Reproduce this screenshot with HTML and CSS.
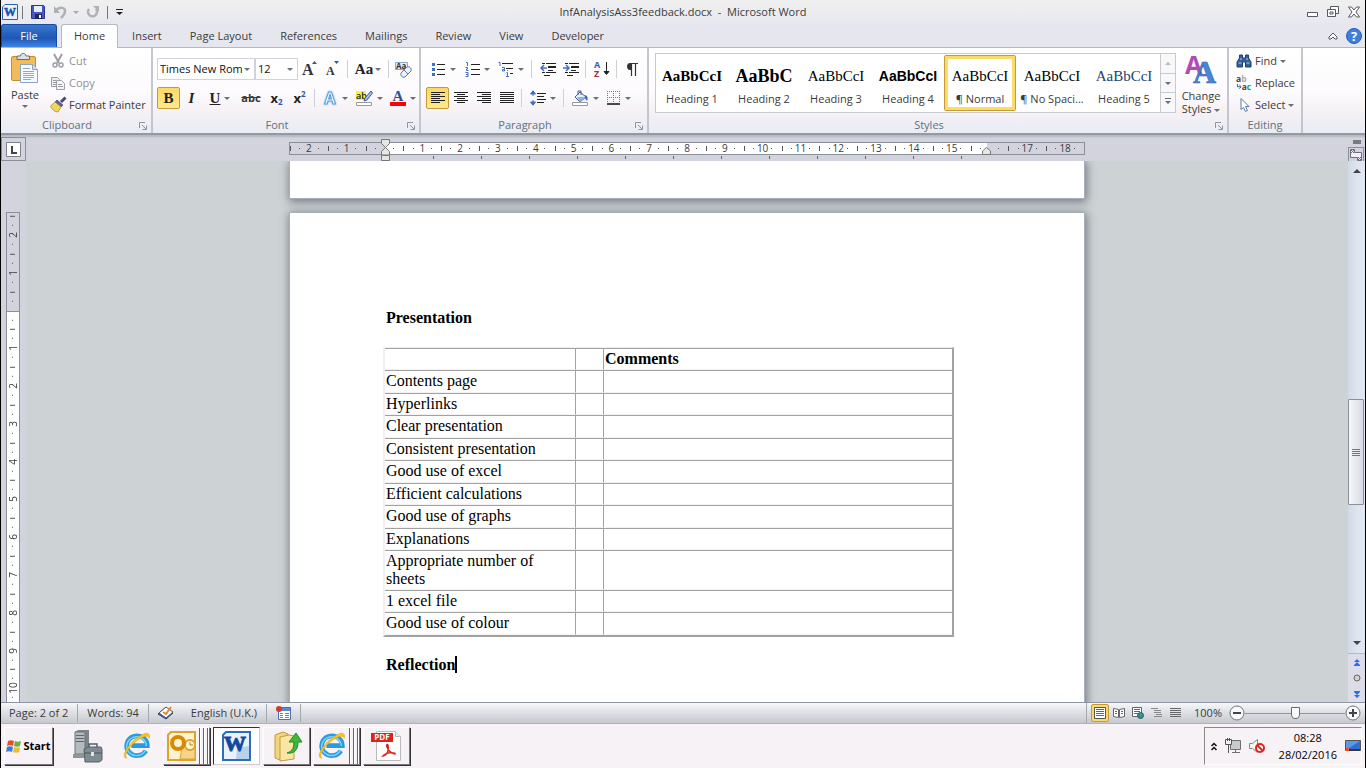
FILE: index.html
```html
<!DOCTYPE html>
<html lang="en">
<head>
    <meta charset="UTF-8">
    <title>InfAnalysisAss3feedback.docx - Microsoft Word</title>
    <link rel="stylesheet" href="styles.css">
</head>
<body>
<svg class="defs" aria-hidden="true">
    <symbol id="launcher" viewBox="0 0 8 8"><path d="M.5 6V.5H6M3 3l4 4M7.500 3.500v4h-4" fill="none" stroke="#8f959c"/></symbol>
    <symbol id="ie" viewBox="0 0 32 32">
        <path d="M25.500 21A11 10.500 0 1 1 27 15.500H10" fill="none" stroke="#2a9be0" stroke-width="5"/>
        <path d="M25 20.500A10.500 10 0 1 1 26 16" fill="none" stroke="#7fd4fa" stroke-width="1.500"/>
        <path d="M5 29C-1 29 4 17 14 9S31 0 29 8c0-4-6-3-14 3S2 26 5 29z" fill="#f8c51c" stroke="#e0a010" stroke-width=".6"/>
    </symbol>
</svg>

<!-- title bar -->
<header class="titlebar">
    <div class="quick">
        <svg width="16" height="16" viewBox="0 0 16 16"><path d="M3 .500h12.500v15H.5V3z" fill="#eaf3fc" stroke="#2a62b4"/><text x="8" y="12" text-anchor="middle" font-family="Liberation Serif" font-weight="bold" font-size="12" fill="#1c52a8" stroke="#1c52a8" stroke-width=".5">W</text></svg>
        <i class="bar"></i>
        <button type="button" aria-label="Save"><svg width="14" height="14" viewBox="0 0 14 14"><path d="M.5.5h12l1 1v12H.5z" fill="#4b55c4" stroke="#2c3390"/><path d="M3 1h8v6H3z" fill="#e4eefb"/><path d="M4 9h7v5H4z" fill="#20265c"/><path d="M8 10h2v3H8z" fill="#fff"/></svg></button>
        <button type="button" class="undo" aria-label="Undo"><svg width="13" height="13" viewBox="0 0 13 13"><path d="M2 4c4-3 9-3 9 1 0 3-2 5-4 7" fill="none" stroke="#aeb1b6" stroke-width="2.500"/><path d="M0 0v7h6z" fill="#aeb1b6"/></svg><b class="caret pale"></b></button>
        <button type="button" aria-label="Repeat"><svg width="14" height="13" viewBox="0 0 14 13"><path d="M3 3a4.500 4.500 0 1 0 7 0" fill="none" stroke="#aeb1b6" stroke-width="2.500"/><path d="M7 0h6v6z" fill="#aeb1b6"/></svg></button>
        <i class="bar"></i>
        <button type="button" aria-label="Customize"><svg width="7" height="6" viewBox="0 0 7 6"><path d="M0 0h7v1H0zM0 3h7L3.500 6z" fill="#222"/></svg></button>
    </div>
    <h1>InfAnalysisAss3feedback.docx&nbsp; -&nbsp; Microsoft Word</h1>
    <div class="winbtns">
        <button type="button" aria-label="Minimize"><svg width="11" height="12" viewBox="0 0 11 12"><path d="M.5 6.500h10v4H.5z" fill="#fff" stroke="#555a61"/></svg></button>
        <button type="button" aria-label="Restore"><svg width="12" height="12" viewBox="0 0 12 12"><path d="M3.500.5h8v7h-8z" fill="#fff" stroke="#555a61"/><path d="M.5 3.500h8v7h-8z" fill="#fff" stroke="#555a61"/><path d="M3 6h3v2H3z" fill="none" stroke="#555a61"/></svg></button>
        <button type="button" aria-label="Close"><svg width="12" height="12" viewBox="0 0 12 12"><path d="M.5 1h3L6 4l2.500-3h3L8 6l3.500 5h-3L6 8l-2.500 3h-3L4 6z" fill="#fff" stroke="#555a61"/></svg></button>
    </div>
</header>

<!-- tabs -->
<nav class="tabs">
    <a href="#" class="file">File</a>
    <a href="#" class="on">Home</a>
    <a href="#">Insert</a>
    <a href="#">Page Layout</a>
    <a href="#">References</a>
    <a href="#">Mailings</a>
    <a href="#">Review</a>
    <a href="#">View</a>
    <a href="#">Developer</a>
    <div class="help">
        <button type="button" aria-label="Minimize the Ribbon"><svg width="10" height="8" viewBox="0 0 10 8"><path d="M1 5l4-4 4 4v2H7L5 5 3 7H1z" fill="#fff" stroke="#555a61"/></svg></button>
        <button type="button" aria-label="Help"><svg width="16" height="16" viewBox="0 0 16 16"><circle cx="8" cy="8" r="7.500" fill="#3f7fdc" stroke="#2a5fb4"/><text x="8" y="13" text-anchor="middle" font-family="Open Sans" font-weight="bold" font-size="13" fill="#fff">?</text></svg></button>
    </div>
</nav>

<!-- ribbon -->
<div class="ribbon">
    <section class="group clipboard">
        <div class="body">
            <button type="button" class="big">
                <svg width="28" height="31" viewBox="0 0 28 31"><rect x=".5" y="3.500" width="24" height="24" rx="1.500" fill="#f0bc5a" stroke="#c98e2c"/><path d="M6 6.500V3h3.500C9.500-.5 15-.5 15 3h3.500v3.500z" fill="#dde1e5" stroke="#666c74"/><path d="M9.500 11.500h12l5 5v13h-17z" fill="#f8fbff" stroke="#8ba3c4"/><path d="M21.500 11.500v5h5" fill="#d2e0f2" stroke="#8ba3c4"/><path d="M12 15.500h7M12 18.500h11M12 20.500h11M12 22.500h11M12 24.500h11M12 26.500h8" stroke="#8fa8ce"/></svg>
                <span>Paste</span>
                <b class="caret"></b>
            </button>
            <div class="list">
                <button type="button" disabled><svg width="16" height="16" viewBox="0 0 16 16"><path d="M4 1l5 9M12 1L7 10" stroke="#9b9fa5" stroke-width="2"/><circle cx="5" cy="12" r="2" fill="none" stroke="#9b9fa5" stroke-width="1.500"/><circle cx="11" cy="12" r="2" fill="none" stroke="#9b9fa5" stroke-width="1.500"/></svg>Cut</button>
                <button type="button" disabled><svg width="16" height="16" viewBox="0 0 16 16"><path d="M1.500 2.500h6l2 2v7h-8z" fill="#eee" stroke="#9b9fa5"/><path d="M6.500 5.500h5l3 3v6h-8z" fill="#f4f4f4" stroke="#9b9fa5"/><path d="M3 5.500h3M3 7.500h3M8 9.500h4M8 11.500h5M3 9.500h3" stroke="#9b9fa5"/></svg>Copy</button>
                <button type="button"><svg width="16" height="16" viewBox="0 0 16 16"><path d="M15.500.5L11 5" stroke="#4a4a6a" stroke-width="3"/><path d="M7 3l6 5-2 2-6-5z" fill="#5b62a8" stroke="#33386e" stroke-width=".6"/><path d="M5 5l6 5-3 5c-3 0-6-2-7.500-6z" fill="#f1d65e" stroke="#a8842a" stroke-width=".7"/></svg>Format Painter</button>
            </div>
        </div>
        <footer>Clipboard<svg width="8" height="8"><use href="#launcher"/></svg></footer>
    </section>

    <section class="group font">
        <div class="body rows">
            <div class="row">
                <select class="face" aria-label="Font"><option>Times New Rom</option></select>
                <select class="size" aria-label="Font size"><option>12</option></select>
                <button type="button" class="tool serif" aria-label="Grow font"><svg width="16" height="18" viewBox="0 0 16 18"><text x="0" y="15" font-family="Liberation Serif" font-weight="bold" font-size="16" fill="#333">A</text><path d="M10 4h5l-2.500-3z" fill="#2b57b0"/></svg></button>
                <button type="button" class="tool serif" aria-label="Shrink font"><svg width="14" height="18" viewBox="0 0 14 18"><text x="0" y="15" font-family="Liberation Serif" font-weight="bold" font-size="12" fill="#333">A</text><path d="M8 1h5l-2.500 3z" fill="#2b57b0"/></svg></button>
                <i class="sep"></i>
                <button type="button" class="tool wide serif case" aria-label="Change case">Aa<b class="caret"></b></button>
                <i class="sep"></i>
                <button type="button" class="tool" aria-label="Clear formatting"><svg width="17" height="17" viewBox="0 0 17 17"><path d="M.5 1.500h12v7H.5z" fill="#e6eefb" stroke="#8ea8cc"/><text x="1" y="8" font-family="Open Sans" font-weight="bold" font-size="8" fill="#333">Aa</text><path d="M6 12l6-6c2-1 5 1 4 4l-6 6c-3 1-5-2-4-4z" fill="#edf2fc" stroke="#5878a8"/><path d="M9 9l4 4" stroke="#5878a8"/></svg></button>
            </div>
            <div class="row">
                <button type="button" class="tool serif on"><b>B</b></button>
                <button type="button" class="tool serif"><em>I</em></button>
                <button type="button" class="tool wide serif"><u>U</u><b class="caret"></b></button>
                <button type="button" class="tool strike"><s>abc</s></button>
                <button type="button" class="tool script">x<sub>2</sub></button>
                <button type="button" class="tool script">x<sup>2</sup></button>
                <i class="sep"></i>
                <button type="button" class="tool wide" aria-label="Text effects"><svg width="16" height="16" viewBox="0 0 16 16"><text class="glow" x="8" y="14" text-anchor="middle" font-family="Open Sans" font-weight="bold" font-size="16" fill="#fff" stroke="#5b9bd3">A</text></svg><b class="caret"></b></button>
                <button type="button" class="tool wide" aria-label="Text highlight colour"><svg width="17" height="17" viewBox="0 0 17 17"><path d="M0 1h10v9H0z" fill="#f7f04a"/><text x="0" y="9" font-family="Open Sans" font-weight="600" font-size="9" fill="#222">ab</text><path d="M15 1l1.500 2L11 10l-3 1 1-3z" fill="#9fbdf0" stroke="#45639c"/><path d="M.5 12.500h15v3H.5z" fill="#fff" stroke="#999"/></svg><b class="caret"></b></button>
                <button type="button" class="tool wide" aria-label="Font colour"><svg width="16" height="17" viewBox="0 0 16 17"><text x="8" y="11" text-anchor="middle" font-family="Liberation Serif" font-weight="bold" font-size="15" fill="#2f4f8f">A</text><path d="M0 12h16v4H0z" fill="#f00"/></svg><b class="caret"></b></button>
            </div>
        </div>
        <footer>Font<svg width="8" height="8"><use href="#launcher"/></svg></footer>
    </section>

    <section class="group para">
        <div class="body rows">
            <div class="row">
                <button type="button" class="tool wide" aria-label="Bullets"><svg width="15" height="15" viewBox="0 0 15 15"><path d="M1 1h3v3H1zM1 6h3v3H1zM1 11h3v3H1z" fill="#3f6fc4"/><path d="M6 2.500h8M6 7.500h8M6 12.500h8" stroke="#222"/></svg><b class="caret"></b></button>
                <button type="button" class="tool wide" aria-label="Numbering"><svg width="15" height="15" viewBox="0 0 15 15"><path d="M1 .5h1.500V4M.5 5.500h2v1.500h-1v1.500h2M.5 10.500h2.500v4H.5M1 12.500h2" fill="none" stroke="#3f6fc4"/><path d="M6 2.500h9M6 7.500h9M6 12.500h9" stroke="#222"/></svg><b class="caret"></b></button>
                <button type="button" class="tool wide" aria-label="Multilevel list"><svg width="16" height="16" viewBox="0 0 16 16"><path d="M.5 1.500H2V5M4 6.500h2.500V10H4.500V8.500h2M9.500 9v1M8.500 11.500h1V15M8 15.500h3" fill="none" stroke="#3f6fc4"/><path d="M4 2.500h11M8 7.500h7M12 12.500h3" stroke="#222"/></svg><b class="caret"></b></button>
                <i class="sep"></i>
                <button type="button" class="tool" aria-label="Decrease indent"><svg width="16" height="14" viewBox="0 0 16 14"><path d="M2 1.500h3M6 1.500h10M8 4.500h8M8 5.500h8M8 8.500h5M2 10.500h3M6 10.500h10M4 13.500h6" stroke="#222"/><path d="M7 6H1M4 3L1 6l3 3" stroke="#3f6fc4" stroke-width="1.500" fill="none"/></svg></button>
                <button type="button" class="tool" aria-label="Increase indent"><svg width="16" height="14" viewBox="0 0 16 14"><path d="M2 1.500h3M6 1.500h10M8 4.500h8M8 5.500h8M8 8.500h5M2 10.500h3M6 10.500h10M4 13.500h6" stroke="#222"/><path d="M0 6h6M3 3l3 3-3 3" stroke="#3f6fc4" stroke-width="1.500" fill="none"/></svg></button>
                <i class="sep"></i>
                <button type="button" class="tool" aria-label="Sort"><svg width="16" height="16" viewBox="0 0 16 16"><text x="0" y="7" font-family="Open Sans" font-weight="bold" font-size="9" fill="#3560b0">A</text><text x="0" y="16" font-family="Open Sans" font-weight="bold" font-size="9" fill="#a03040">Z</text><path d="M12.500 1v12M10 10.500l2.500 3 2.500-3z" stroke="#222" fill="#222"/></svg></button>
                <i class="sep"></i>
                <button type="button" class="tool" aria-label="Show formatting marks"><svg width="11" height="13" viewBox="0 0 11 13"><path d="M4.500 13V.5H11M8.500.5V13" fill="none" stroke="#333" stroke-width="1.200"/><path d="M5 0H3C-1 0-1 7 3 7h2z" fill="#333"/></svg></button>
            </div>
            <div class="row spaced">
                <button type="button" class="tool on" aria-label="Align left"><svg width="14" height="12" viewBox="0 0 14 12"><path d="M0 .5h14M0 2.500h9M0 4.500h14M0 6.500h9M0 8.500h14M0 10.500h9" stroke="#222"/></svg></button>
                <button type="button" class="tool" aria-label="Centre"><svg width="14" height="12" viewBox="0 0 14 12"><path d="M0 .5h14M3 2.500h8M0 4.500h14M3 6.500h8M0 8.500h14M3 10.500h8" stroke="#222"/></svg></button>
                <button type="button" class="tool" aria-label="Align right"><svg width="14" height="12" viewBox="0 0 14 12"><path d="M0 .5h14M5 2.500h9M0 4.500h14M5 6.500h9M0 8.500h14M5 10.500h9" stroke="#222"/></svg></button>
                <button type="button" class="tool" aria-label="Justify"><svg width="14" height="12" viewBox="0 0 14 12"><path d="M0 .5h14M0 2.500h14M0 4.500h14M0 6.500h14M0 8.500h14M0 10.500h14" stroke="#222"/></svg></button>
                <i class="sep"></i>
                <button type="button" class="tool wide" aria-label="Line spacing"><svg width="16" height="16" viewBox="0 0 16 16"><path d="M3 1v5M3 10v5M.5 4L3 .8 5.500 4zM.5 12L3 15.200 5.500 12z" stroke="#3f6fc4" fill="#3f6fc4"/><path d="M7 3.500h9M7 6.500h7M7 9.500h9M7 12.500h7" stroke="#222"/></svg><b class="caret"></b></button>
                <i class="sep"></i>
                <button type="button" class="tool wide" aria-label="Shading"><svg width="17" height="17" viewBox="0 0 17 17"><path d="M8 2l6 5-6 5-5-5z" fill="#e9f0fb" stroke="#44608c"/><path d="M5 7h9l-6 5z" fill="#8fb1e8"/><path d="M6 5V1h3v4" fill="none" stroke="#44608c"/><path d="M13 5c3 1 3 4 2 6l-2-3z" fill="#2e63c4"/><path d="M.5 12.500h15v3H.5z" fill="#fff" stroke="#999"/></svg><b class="caret"></b></button>
                <button type="button" class="tool wide" aria-label="Borders"><svg width="14" height="14" viewBox="0 0 14 14"><path d="M0 .5h13M0 6.500h13M.5 0v12M6.500 0v12M12.500 0v12" stroke="#777" stroke-dasharray="1 1"/><path d="M0 13h13" stroke="#111" stroke-width="1.500"/></svg><b class="caret"></b></button>
            </div>
        </div>
        <footer>Paragraph<svg width="8" height="8"><use href="#launcher"/></svg></footer>
    </section>

    <section class="group styles">
        <div class="body">
            <div class="gallery">
                <button type="button"><span class="pv strong">AaBbCcI</span>Heading 1</button>
                <button type="button"><span class="pv strong large">AaBbC</span>Heading 2</button>
                <button type="button"><span class="pv">AaBbCcI</span>Heading 3</button>
                <button type="button"><span class="pv sans">AaBbCcI</span>Heading 4</button>
                <button type="button" class="on"><span class="pv">AaBbCcI</span>¶ Normal</button>
                <button type="button"><span class="pv">AaBbCcI</span>¶ No Spaci...</button>
                <button type="button"><span class="pv navy">AaBbCcI</span>Heading 5</button>
                <div class="updown">
                    <button type="button" aria-label="Row up" disabled><b class="caret up"></b></button>
                    <button type="button" aria-label="Row down"><b class="caret"></b></button>
                    <button type="button" aria-label="More"><b class="caret line"></b></button>
                </div>
            </div>
            <button type="button" class="big change">
                <svg width="30" height="30" viewBox="0 0 30 30"><text x="-1" y="19" font-family="Open Sans" font-weight="bold" font-size="25" fill="#b04cb4">A</text><text x="7" y="28" font-family="Liberation Serif" font-weight="bold" font-size="32" fill="#4a86d8" stroke="#2c5fae" stroke-width=".6">A</text></svg>
                <span>Change<br>Styles <b class="caret"></b></span>
            </button>
        </div>
        <footer>Styles<svg width="8" height="8"><use href="#launcher"/></svg></footer>
    </section>

    <section class="group editing">
        <div class="body">
            <div class="list">
                <button type="button"><svg width="15" height="14" viewBox="0 0 15 14"><path d="M3 1h3v3h3V1h3v3l2.500 4v5H9V8H6v5H.5V8L3 4z" fill="#345f9f" stroke="#1f3f78"/><path d="M2 9h3M10 9h3M3.500 5h2M9.500 5h2" stroke="#b8d0f0"/></svg>Find <b class="caret"></b></button>
                <button type="button"><svg width="17" height="16" viewBox="0 0 17 16"><text x="0" y="7" font-family="Open Sans" font-weight="bold" font-size="9" fill="#444">a<tspan fill="#aaa">b</tspan></text><text x="6" y="15" font-family="Open Sans" font-weight="bold" font-size="9" fill="#444">a<tspan fill="#2a9a3a">c</tspan></text><path d="M1.500 9v3H5M3.500 10L5.500 12l-2 2" stroke="#2b57b0" fill="none"/></svg>Replace</button>
                <button type="button"><svg width="15" height="16" viewBox="0 0 15 16"><path d="M4.500 1.500v11l2.500-2 2 4 2-1-2-4h3.500z" fill="#fff" stroke="#5a78a8"/></svg>Select <b class="caret"></b></button>
            </div>
        </div>
        <footer>Editing</footer>
    </section>
</div>

<!-- document area -->
<div class="hbar">
    <div class="tabstop"><svg width="15" height="15" viewBox="0 0 15 15"><path d="M.5.5h14v14H.5z" fill="#fff" stroke="#7c818c"/><path d="M6 4v7h5" fill="none" stroke="#444" stroke-width="2"/></svg></div>
    <div class="htrack">
        <div class="ruler">
            <span>2</span><span>1</span><span></span><span>1</span><span>2</span><span>3</span><span>4</span><span>5</span><span>6</span><span>7</span><span>8</span><span>9</span><span>10</span><span>11</span><span>12</span><span>13</span><span>14</span><span>15</span><span></span><span>17</span><span>18</span>
            <svg class="indent left" width="10" height="22" viewBox="0 0 10 22"><path d="M.5.5h8v4l-4 4-4-4zM.5 16v-3.500l4-4 4 4V16zM.5 16.500h8v5h-8z" fill="#e6e6e2" stroke="#777"/></svg>
            <svg class="indent right" width="10" height="8" viewBox="0 0 10 8"><path d="M.5 7.500V4l4-3.500 4 3.500v3.500z" fill="#e6e6e2" stroke="#777"/></svg>
        </div>
    </div>
    <div class="vtop">
        <i></i>
        <button type="button" aria-label="View ruler"><svg width="14" height="14" viewBox="0 0 14 14"><path d="M1.500 1.500h4v3h7v8h-4v-3h-7z" fill="#f6eefa" stroke="#6b7078"/><path d="M2 2l3 3M5 2L2 5M9 9l3 3M12 9l-3 3" stroke="#6b7078"/></svg></button>
    </div>
</div>
<main class="workspace">
    <div class="vbar">
        <div class="vruler">
            <span>2</span><span>1</span><span></span><span>1</span><span>2</span><span>3</span><span>4</span><span>5</span><span>6</span><span>7</span><span>8</span><span>9</span><span>10</span><span></span>
        </div>
    </div>
    <div class="canvas">
        <div class="page prev"></div>
        <article class="page">
            <h2>Presentation</h2>
            <table>
                <thead>
                <tr><th class="item"></th><th class="mark"></th><th>Comments</th></tr>
                </thead>
                <tbody>
                <tr><td>Contents page</td><td></td><td></td></tr>
                <tr><td>Hyperlinks</td><td></td><td></td></tr>
                <tr><td>Clear presentation</td><td></td><td></td></tr>
                <tr><td>Consistent presentation</td><td></td><td></td></tr>
                <tr><td>Good use of excel</td><td></td><td></td></tr>
                <tr><td>Efficient calculations</td><td></td><td></td></tr>
                <tr><td>Good use of graphs</td><td></td><td></td></tr>
                <tr><td>Explanations</td><td></td><td></td></tr>
                <tr><td>Appropriate number of<br>sheets</td><td></td><td></td></tr>
                <tr><td>1 excel file</td><td></td><td></td></tr>
                <tr><td>Good use of colour</td><td></td><td></td></tr>
                </tbody>
            </table>
            <h2 class="typing">Reflection</h2>
        </article>
    </div>
    <div class="scroll">
        <button type="button" aria-label="Scroll up"><b class="caret up"></b></button>
        <div class="track"><div class="thumb"><svg width="8" height="7" viewBox="0 0 8 7"><path d="M0 .5h8M0 2.500h8M0 4.500h8M0 6.500h8" stroke="#777"/></svg></div></div>
        <button type="button" aria-label="Scroll down"><b class="caret"></b></button>
        <div class="browse">
            <button type="button" aria-label="Previous page"><svg width="6" height="7" viewBox="0 0 6 7"><path d="M0 3l3-3 3 3zM0 6l3-3 3 3v1H0z" fill="#2f6df0"/></svg></button>
            <button type="button" aria-label="Select browse object"><svg width="8" height="8" viewBox="0 0 8 8"><circle cx="4" cy="4" r="3" fill="#d0d0d0" stroke="#666"/></svg></button>
            <button type="button" aria-label="Next page"><svg width="6" height="7" viewBox="0 0 6 7"><path d="M0 1l3 3 3-3V0H0zM0 4l3 3 3-3z" fill="#2f6df0"/></svg></button>
        </div>
    </div>
</main>

<!-- status bar -->
<div class="status">
    <span class="cell">Page: 2 of 2</span>
    <span class="cell">Words: 94</span>
    <span class="cell lang"><svg width="16" height="14" viewBox="0 0 16 14"><path d="M0 8l7-6 8 5-7 6z" fill="#3a5ea8" stroke="#263f78"/><path d="M1 7l7-6 7 5-7 6z" fill="#fff" stroke="#556"/><path d="M5 6l3 2 5-7" fill="none" stroke="#e08a20" stroke-width="2"/></svg>English (U.K.)</span>
    <span class="cell"><svg width="15" height="14" viewBox="0 0 15 14"><path d="M2.500 1.500h12v12h-12z" fill="#fff" stroke="#4a6cb0"/><path d="M3 2h11v3H3z" fill="#5e88d0"/><path d="M4 7.500h3M9 7.500h4M4 9.500h3M9 9.500h4M4 11.500h3M9 11.500h4" stroke="#6a86b8"/><circle cx="3" cy="3" r="3" fill="#d23a2a"/></svg></span>
    <div class="views">
        <button type="button" class="on" aria-label="Print Layout"><svg width="12" height="12" viewBox="0 0 12 12"><path d="M.5.5h11v11H.5z" fill="#fff" stroke="#555"/><path d="M2 2.500h8M2 4.500h8M2 6.500h8M2 8.500h8" stroke="#666"/></svg></button>
        <button type="button" aria-label="Full Screen Reading"><svg width="12" height="12" viewBox="0 0 12 12"><path d="M.5 1.500l5 1v8l-5-1zM11.500 1.500l-5 1v8l5-1z" fill="#fff" stroke="#666"/><path d="M2 4.500h2M2 6.500h2M8 4.500h2M8 6.500h2" stroke="#666"/></svg></button>
        <button type="button" aria-label="Web Layout"><svg width="12" height="12" viewBox="0 0 12 12"><path d="M.5.5h9v9h-9z" fill="#fff" stroke="#666"/><path d="M2 2.500h6M2 4.500h6M2 6.500h4" stroke="#666"/><circle cx="8.500" cy="8.500" r="3" fill="#2f7fc4" stroke="#2a6a50"/><path d="M8 6l2 2-2 2z" fill="#49a84c"/></svg></button>
        <button type="button" aria-label="Outline"><svg width="12" height="10" viewBox="0 0 12 10"><path d="M0 .5h7M3 2.500h7M3 4.500h7M5 6.500h6M3 8.500h8" stroke="#888"/></svg></button>
        <button type="button" aria-label="Draft"><svg width="12" height="10" viewBox="0 0 12 10"><path d="M0 .5h11M0 2.500h11M0 4.500h11M0 6.500h11M0 8.500h11" stroke="#666"/></svg></button>
    </div>
    <span class="pct">100%</span>
    <button type="button" aria-label="Zoom out"><svg width="16" height="16" viewBox="0 0 16 16"><circle cx="8" cy="8" r="7" fill="#f8f9fb" stroke="#70767e"/><path d="M4 8h8" stroke="#444" stroke-width="2"/></svg></button>
    <input type="range" class="zoom" aria-label="Zoom" min="0" max="200" value="100">
    <button type="button" aria-label="Zoom in"><svg width="16" height="16" viewBox="0 0 16 16"><circle cx="8" cy="8" r="7" fill="#f8f9fb" stroke="#70767e"/><path d="M4 8h8M8 4v8" stroke="#444" stroke-width="2"/></svg></button>
</div>

<!-- taskbar -->
<div class="taskbar">
    <button type="button" class="start"><svg width="16" height="16" viewBox="0 0 16 16"><path d="M2 3c2-1 4-1 6 0L7 8C5 7 3 7 1 8z" fill="#e8502a"/><path d="M9 3c2 1 4 1 6 0l-1 5c-2 1-4 1-6 0z" fill="#6cb33e"/><path d="M1 9c2-1 4-1 6 0l-1 5c-2-1-4-1-6 0z" fill="#3a7ad8"/><path d="M8 9c2 1 4 1 6 0l-1 5c-2 1-4 1-6 0z" fill="#f4bc28"/></svg>Start</button>
    <button type="button" class="launch" aria-label="Server Manager"><svg width="30" height="32" viewBox="0 0 30 32"><path d="M2 2l3-2h11v20l-2 4H2z" fill="#7d858b"/><path d="M2 2h10v22H2z" fill="#b4bbc0" stroke="#6b7378"/><path d="M3 5.500h8M3 8.500h8M3 11.500h8" stroke="#5f676c"/><path d="M0 24h12v4H0z" fill="#8d969b"/><path d="M11 19l4-2h13l1 2v11l-3 2H12z" fill="#7f8b93" stroke="#566067"/><path d="M16 17v-3h8v3" fill="none" stroke="#566067" stroke-width="1.500"/><path d="M11 23h18" stroke="#4c555b"/><path d="M18 22h3v4h-3z" fill="#dfe4e7"/></svg></button>
    <button type="button" class="launch" aria-label="Internet Explorer"><svg width="30" height="32"><use href="#ie"/></svg></button>
    <button type="button" class="task stack" aria-label="Outlook"><svg width="30" height="30" viewBox="0 0 30 30"><path d="M4 1h24v28H1V4z" fill="#fdf3d0" stroke="#dca528" stroke-width="2"/><path d="M15 16l13-3v15H13z" fill="#f6d489" stroke="#dca528"/><circle cx="23" cy="14" r="5" fill="#fff8e0" stroke="#e0a020" stroke-width="2"/><path d="M23 11v3h3" fill="none" stroke="#b07a10"/><circle cx="11" cy="12" r="6" fill="none" stroke="#d98a04" stroke-width="4"/></svg></button>
    <button type="button" class="task pressed" aria-label="Word"><svg width="30" height="30" viewBox="0 0 30 30"><path d="M4 1h24v28H1V4z" fill="#e8f2fc" stroke="#2f6cba" stroke-width="2"/><path d="M15 17l12-2v13H14z" fill="#b8d2ee"/><text x="13" y="20" text-anchor="middle" font-family="Liberation Serif" font-weight="bold" font-size="22" fill="#14489c" stroke="#14489c">W</text></svg></button>
    <button type="button" class="task" aria-label="Files"><svg width="30" height="30" viewBox="0 0 30 30"><path d="M3 4l8-3 5 2v25l-8 1-5-2z" fill="#f0d480" stroke="#c49a3a"/><path d="M8 6l9-2 5 1v23l-14 2z" fill="#f9e6a4" stroke="#c49a3a"/><path d="M15 22c6-2 7-6 7-11h-5l7-9 6 9h-4c0 8-4 12-11 11z" fill="#3cb83c" stroke="#1f8a28"/></svg></button>
    <button type="button" class="task stack" aria-label="Internet Explorer windows"><svg width="30" height="30"><use href="#ie"/></svg></button>
    <button type="button" class="task" aria-label="PDF reader"><svg width="32" height="32" viewBox="0 0 32 32"><path d="M5.500 1.500h19l5 5v24h-24z" fill="#fff" stroke="#bbb"/><path d="M24.500 1.500v5h5" fill="#eee" stroke="#bbb"/><path d="M0 3h22v9H0z" fill="#d8261c"/><text x="11" y="10" text-anchor="middle" font-family="Open Sans" font-weight="bold" font-size="8" fill="#fff">PDF</text><path d="M12 26c5-1 6-7 5-11-1-1-2 0-1 2 1 3 4 6 8 7 1-2-9-2-12 2z" fill="none" stroke="#d8261c" stroke-width="1.500"/></svg></button>
    <div class="tray">
        <button type="button" aria-label="Show hidden icons"><svg width="6" height="9" viewBox="0 0 6 9"><path d="M.5 4L3 1.500 5.500 4M.5 8L3 5.500 5.500 8" fill="none" stroke="#111" stroke-width="1.500"/></svg></button>
        <svg width="16" height="16" viewBox="0 0 16 16"><path d="M5.500 2.500h10v9h-10z" fill="#c8cacc" stroke="#6c7074"/><path d="M7 14.500h8M10.500 12v2" stroke="#6c7074"/><path d="M.5 1.500h6v5h-6z" fill="#f0f0f0" stroke="#555"/><path d="M2.500 0v3M4.500 0v3M3.500 7v8" stroke="#555"/></svg>
        <svg width="16" height="16" viewBox="0 0 16 16"><path d="M.5 5.500h3l5-4v13l-5-4h-3z" fill="#f4f4f4" stroke="#888"/><circle cx="11" cy="10" r="4" fill="#fff" stroke="#e02418" stroke-width="2"/><path d="M8 7l6 6" stroke="#e02418" stroke-width="2"/></svg>
        <div class="clock"><time>08:28</time><span>28/02/2016</span></div>
        <button type="button" aria-label="Show desktop"><svg width="16" height="12" viewBox="0 0 16 12"><path d="M.5.5h15v10H.5z" fill="#2f6fd0" stroke="#555"/><path d="M1 1h14L4 8H1z" fill="#5b98ea"/><path d="M1 9h14v2H1z" fill="#334"/><path d="M1 8h3v3H1z" fill="#e8502a"/></svg></button>
    </div>
</div>
</body>
</html>
```
FILE: styles.css
```css
*{
    margin:0;
    padding:0;
    box-sizing: border-box;
}
html,body{
    height: 100%;
    overflow: hidden;
}
body{
    display: flex;
    flex-direction: column;
    border-left: 1px solid #000;
    border-right: 1px solid #000;
    background: #e6e7ee;
    color: #3b3b3b;
    font: 11px/14px "Open Sans","Noto Sans",sans-serif;
}
button,select,input{
    font: inherit;
    color: inherit;
}
button{
    border: 0;
    background: none;
}
svg{
    display: block;
    flex: none;
    overflow: visible;
}
a{
    color: inherit;
    text-decoration: none;
}
.defs{
    position: absolute;
    width: 0;
    height: 0;
}
/*drop-down triangle*/
.caret{
    display: inline-block;
    flex: none;
    border: 3px solid transparent;
    border-top-color: #6a6f76;
    border-bottom: 0;
    vertical-align: middle;
}
.caret.pale{
    border-top-color: #a5a8ad;
}
.caret.up{
    border-top: 0;
    border-bottom: 3px solid #b5b8bd;
}
.caret.line{
    position: relative;
}
.caret.line:before{
    content: "";
    position: absolute;
    left: -3px;
    top: -6px;
    width: 6px;
    height: 1px;
    background: #6a6f76;
}

/*title bar*/
.titlebar{
    flex: none;
    height: 24px;
    display: grid;
    grid-template-columns: 1fr auto 1fr;
    align-items: center;
    background: linear-gradient(#f0f0f0,#e7e8ef);
}
.titlebar h1{
    font-size: 11px;
    font-weight: normal;
}
.quick{
    display: flex;
    align-items: center;
    gap: 7px;
    padding-left: 1px;
}
.quick .bar{
    width: 1px;
    height: 13px;
    margin: 0 -2px 0 -3px;
    background: #777;
}
.quick button{
    display: flex;
    align-items: center;
}
.quick .undo{
    gap: 6px;
    padding-left: 2px;
}
.quick .bar + button{
    padding-left: 3px;
}
.quick button + .bar{
    margin-left: 0;
}
.winbtns{
    display: flex;
    justify-content: flex-end;
    gap: 9px;
    padding-right: 5px;
}

/*tabs*/
.tabs{
    flex: none;
    height: 24px;
    display: flex;
    line-height: 23px;
    background: #e6e7ee;
    border-bottom: 1px solid #b4b8c2;
}
.tabs a{
    padding: 0 14px;
}
.tabs .file{
    width: 56px;
    padding: 0;
    margin-right: 4px;
    text-align: center;
    color: #fff;
    background: linear-gradient(#3a78d0,#1f56b4 60%,#3d86e6);
    border: 1px solid #1c4a9c;
    border-bottom: 0;
    border-radius: 3px 3px 0 0;
}
.tabs .on{
    height: 24px;
    padding: 0 12px;
    background: #fff;
    border: 1px solid #b4b8c2;
    border-bottom: 0;
    border-radius: 3px 3px 0 0;
}
.tabs .file,.tabs .on{
    line-height: 21px;
}
.help{
    margin-left: auto;
    display: flex;
    align-items: center;
    gap: 8px;
    padding-right: 3px;
}

/*ribbon*/
.ribbon{
    flex: none;
    height: 87px;
    display: flex;
    background: linear-gradient(#fff,#fdfbfd 50%,#f5f1f5 75%,#e9ecf4);
    border-bottom: 2px solid #929a9f;
}
.group{
    flex: none;
    display: flex;
    flex-direction: column;
    border-right: 2px solid #c3c6cd;
}
.clipboard{ width: 152px; }
.font{ width: 268px; }
.para{ width: 228px; }
.styles{ width: 580px; }
.editing{ width: 74px; }
.group .body{
    flex: 1;
    display: flex;
}
.group footer{
    position: relative;
    height: 16px;
    padding: 1px 18px 0 0;
    text-align: center;
    color: #66707c;
}
.editing footer{
    padding-right: 0;
}
.group footer svg{
    position: absolute;
    right: 4px;
    top: 5px;
}
.big{
    width: 48px;
    display: flex;
    flex-direction: column;
    align-items: center;
    padding-top: 5px;
    line-height: 13px;
    gap: 4px;
}
.list{
    padding: 2px 0 0 1px;
}
.list button{
    height: 22px;
    display: flex;
    align-items: center;
    gap: 3px;
    white-space: nowrap;
}
.list button:disabled{
    color: #8e9197;
}
.editing .list{
    padding-left: 7px;
}
.editing .list svg{
    width: 16px;
}
.rows{
    flex-direction: column;
    padding: 10px 0 0 4px;
    gap: 7px;
}
.row{
    height: 22px;
    display: flex;
    align-items: center;
}
.row select{
    height: 22px;
    padding-left: 2px;
    appearance: none;
    border: 1px solid #cfd3da;
    border-radius: 0;
    color: #111;
    background: #fff url("data:image/svg+xml,%3Csvg xmlns='http://www.w3.org/2000/svg' width='6' height='3'%3E%3Cpath d='M0 0h6L3 3z' fill='%236a6f76'/%3E%3C/svg%3E") no-repeat right 4px center;
}
.face{ width: 98px; }
.size{ width: 43px; }
.tool{
    flex: none;
    width: 23px;
    height: 22px;
    display: flex;
    align-items: center;
    justify-content: center;
    gap: 4px;
}
.tool.wide{
    width: 34px;
}
.tool.on{
    background: linear-gradient(#fbd96a,#ffe98a);
    border: 1px solid #c29a3c;
    border-radius: 2px;
}
.para .row{
    padding-left: 1px;
}
.para .sep{
    margin: 0 4px 0 3px;
}
.serif{
    font: 15px/20px "Liberation Serif",serif;
    color: #222;
}
.case{
    font-weight: bold;
    gap: 2px;
}
.serif u,.serif em{
    font-weight: bold;
}
.strike{
    width: 28px;
    font-weight: bold;
}
.script{
    gap: 0;
    font-size: 13px;
    font-weight: bold;
    color: #222;
}
.script sub,.script sup{
    font-size: 8px;
    color: #2b57b0;
}
.script sub{
    padding-top: 8px;
}
.script sup{
    padding-bottom: 8px;
}
.glow{
    filter: drop-shadow(0 0 1px #7cc0ee);
}
.sep{
    flex: none;
    width: 1px;
    height: 18px;
    margin: 0 3px;
    background: #cdd0d6;
}

/*styles gallery*/
.styles .body{
    padding: 5px 0 0 6px;
}
.gallery{
    height: 60px;
    display: flex;
    border: 1px solid #c6cbd0;
    background: #fff;
}
.gallery > button{
    width: 72px;
    overflow: hidden;
    white-space: nowrap;
    border: 1px solid transparent;
}
.gallery > .on{
    margin: 1px 0;
    border: 1px solid #c69a35;
    border-radius: 2px;
    box-shadow: inset 0 0 0 3px #fbdc6a;
}
.pv{
    display: block;
    height: 31px;
    padding-top: 3px;
    font: 15px/24px "Liberation Serif",serif;
    color: #000;
}
.pv.strong{ font-weight: bold; }
.pv.large{ font-size: 18px; }
.pv.sans{ font: bold 14px/24px "Liberation Sans",sans-serif; }
.pv.navy{ color: #1f3f6e; }
.updown{
    width: 15px;
    display: flex;
    flex-direction: column;
    border-left: 1px solid #c6cbd0;
}
.updown button{
    flex: 1;
    display: flex;
    align-items: center;
    justify-content: center;
    background: #f8f8fa;
}
.updown button + button{
    border-top: 1px solid #c6cbd0;
}
.change{
    width: 50px;
    padding-top: 2px;
}

/*horizontal ruler*/
.hbar{
    flex: none;
    height: 26px;
    display: flex;
    background: #d3d3de;
    box-shadow: inset 0 3px 2px -1px #b4b8be;
}
.tabstop{
    width: 25px;
    height: 24px;
    margin-top: 2px;
    padding: 4px;
    border: 1px solid #8a8f9a;
}
.htrack{
    flex: 1;
    padding-top: 7px;
}
.ruler{
    position: relative;
    max-width: 796px;
    height: 13px;
    margin: 0 auto;
    display: grid;
    grid-template-columns: repeat(21,1fr);
    border: 1px solid #8a8f9a;
    background: linear-gradient(#fff,#fff) 96px 0/601px 100% no-repeat;
}
.ruler:after{
    content: "";
    position: absolute;
    left: 143px;
    top: 13px;
    width: 529px;
    height: 3px;
    background: repeating-linear-gradient(90deg,#666 0 1px,transparent 1px 48px);
}
.ruler span,.vruler span{
    text-align: center;
    font-size: 10px;
    line-height: 11px;
    background:
        linear-gradient(#555,#555) 0 50%/1px 5px no-repeat,
        linear-gradient(#555,#555) 25% 50%/1px 1px no-repeat,
        linear-gradient(#555,#555) 75% 50%/1px 1px no-repeat;
}
.indent{
    position: absolute;
}
.indent.left{
    left: 91px;
    top: -4px;
}
.indent.right{
    left: 692px;
    top: 4px;
}
.vtop{
    width: 17px;
    padding-top: 5px;
}
.vtop i{
    display: block;
    width: 8px;
    height: 4px;
    margin: 0 auto 3px;
    background: #777b82;
}
.vtop button{
    width: 16px;
    height: 16px;
    border: 1px solid #8a8f9a;
}
.vtop svg{
    margin: 0 auto;
}

/*workspace*/
.workspace{
    flex: 1;
    min-height: 0;
    display: flex;
}
.vbar{
    flex: none;
    width: 25px;
    padding: 51px 0 0 5px;
    overflow: hidden;
    background: #d3d3de;
}
.vruler{
    width: 14px;
    padding-top: 3px;
    display: grid;
    grid-auto-rows: 1cm;
    border: 1px solid #8a8f9a;
    background: linear-gradient(#8a8f9a,#8a8f9a) 0 98px/100% 1px no-repeat,linear-gradient(#fff,#fff) 0 99px no-repeat;
}
.vruler span{
    writing-mode: vertical-rl;
    transform: rotate(180deg);
    line-height: 12px;
    background:
        linear-gradient(#555,#555) 50% 100%/5px 1px no-repeat,
        linear-gradient(#555,#555) 50% 25%/1px 1px no-repeat,
        linear-gradient(#555,#555) 50% 75%/1px 1px no-repeat;
}
.canvas{
    flex: 1;
    overflow: hidden;
    background: #cdd3d5;
}
.page{
    max-width: 794px;
    height: 29cm;
    margin: 0 auto;
    padding: 96px;
    background: #fff;
    box-shadow: 0 0 0 1px #a8aebc,1px 2px 9px 2px #777b80;
    color: #000;
    font: 16px/18px "Liberation Serif",serif;
}
.page.prev{
    height: 37px;
    padding: 0;
    margin-bottom: 15px;
}
.page h2{
    font-size: 16px;
}
.page table{
    width: 571px;
    margin: 20px 0 19px -3px;
    table-layout: fixed;
    border: 2px solid #a2a2a2;
    border-top: 1px solid #f2eef1;
    border-left-color: #f2eef1;
    border-spacing: 0;
}
.page th,.page td{
    height: 22px;
    padding: 1px;
    border-top: 1px solid #a2a2a2;
    border-bottom: 1px solid #f4f0f3;
    text-align: left;
    vertical-align: top;
}
.page tbody tr:nth-child(odd) td{
    height: 23px;
}
.page tbody tr:nth-child(9) td{
    height: 40px;
}
.page th + th,.page td + td{
    border-left: 1px solid #a2a2a2;
}
.item{ width: 190px; }
.mark{ width: 28px; }
.typing:after{
    content: "";
    display: inline-block;
    width: 2px;
    height: 17px;
    background: #000;
    vertical-align: top;
}

/*scroll bar*/
.scroll{
    flex: none;
    width: 17px;
    display: flex;
    flex-direction: column;
    background: linear-gradient(90deg,#d2dae8,#dfe5f0 60%,#e2e8f2);
}
.scroll button{
    height: 20px;
    display: flex;
    align-items: center;
    justify-content: center;
}
.scroll .caret{
    border-width: 4px;
    border-top-color: #444;
    border-bottom: 0;
}
.scroll .caret.up{
    border-top: 0;
    border-bottom: 4px solid #444;
}
.track{
    flex: 1;
    padding-top: 218px;
}
.thumb{
    width: 16px;
    height: 106px;
    display: flex;
    align-items: center;
    justify-content: center;
    border: 1px solid #8a8f9a;
    border-radius: 1px;
    background: linear-gradient(90deg,#f6f7fb,#d8dbe4);
}
.browse{
    border-top: 1px solid #b4b8c6;
    background: #dcdde8;
}
.browse button{
    width: 100%;
    height: 16px;
}

/*status bar*/
.status{
    flex: none;
    height: 22px;
    display: flex;
    align-items: center;
    background: linear-gradient(#f6f7f9,#dfe1e6 45%,#c5c9ce);
    border-top: 1px solid #8f95a0;
    border-bottom: 1px solid #b0b3b8;
}
.cell{
    height: 18px;
    display: flex;
    align-items: center;
    padding: 0 9px;
    border-right: 1px solid #a3a8af;
}
.cell:first-child{
    padding-left: 8px;
}
.lang{
    gap: 17px;
}
.views{
    margin-left: auto;
    height: 20px;
    display: flex;
    align-items: center;
    gap: 1px;
    padding-left: 4px;
    border-left: 1px solid #a3a8af;
}
.views button{
    width: 18px;
    height: 18px;
    display: flex;
    align-items: center;
    justify-content: center;
}
.views .on{
    background: #fbd96a;
    border: 1px solid #c29a3c;
    border-radius: 2px;
}
.pct{
    margin: 0 7px 0 9px;
}
.zoom{
    width: 100px;
    height: 16px;
    appearance: none;
    background: linear-gradient(#8e96a0,#8e96a0) 0 50%/100% 1px no-repeat;
}
.zoom::-webkit-slider-thumb{
    appearance: none;
    width: 9px;
    height: 12px;
    border: 1px solid #666c74;
    border-radius: 1px 1px 5px 5px;
    background: #fafafa;
}
.status > button:last-child{
    margin-right: 4px;
}

/*taskbar*/
.taskbar{
    flex: none;
    height: 44px;
    display: flex;
    align-items: center;
    gap: 3px;
    padding: 0 3px;
    background: #f7f2f6;
}
.start,.task{
    height: 38px;
    display: flex;
    align-items: center;
    justify-content: center;
    border: 1px solid;
    border-color: #fff #777 #777 #fff;
    box-shadow: 1px 1px 0 #333;
}
.start{
    width: 49px;
    gap: 1px;
    font-weight: bold;
    color: #000;
}
.launch{
    width: 46px;
    display: flex;
    justify-content: center;
}
.start + .launch{
    margin-left: 9px;
}
.task{
    width: 47px;
}
.stack{
    justify-content: flex-start;
    padding-left: 3px;
    background: repeating-linear-gradient(90deg,#666 0 1px,#fff 1px 2px,transparent 2px 4px) right 0/10px 100% no-repeat;
}
.task.pressed{
    background: #fff;
    border-color: #333 #ccc #ccc #333;
    box-shadow: none;
}
.tray{
    margin-left: auto;
    height: 38px;
    display: flex;
    align-items: center;
    gap: 8px;
    padding: 0 0 0 6px;
    border: 1px solid;
    border-color: #888 #fff #fff #888;
    color: #000;
}
.clock{
    display: flex;
    flex-direction: column;
    align-items: center;
    margin-left: 6px;
    line-height: 17px;
}
```
